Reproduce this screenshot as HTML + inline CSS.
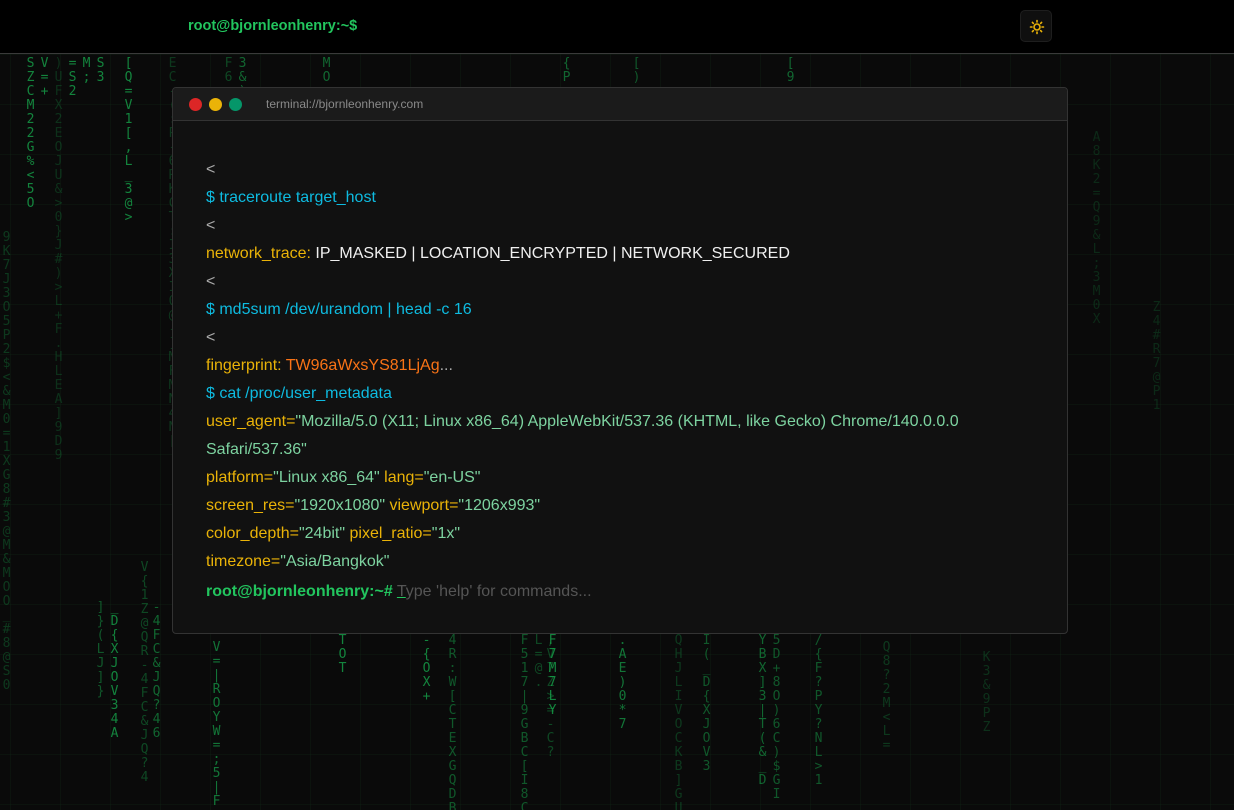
<!DOCTYPE html>
<html><head><meta charset="utf-8">
<style>
*{margin:0;padding:0;box-sizing:border-box}
html,body{width:1234px;height:810px;overflow:hidden;background:#0a0a0a}
body{position:relative;font-family:"Liberation Sans",sans-serif}
.grid{position:absolute;left:0;top:54px;width:1234px;height:756px;
background-image:linear-gradient(to right,rgba(20,60,30,.18) 1px,transparent 1px),linear-gradient(to bottom,rgba(20,60,30,.18) 1px,transparent 1px);
background-size:50px 50px;background-position:10px 0}
.col{position:absolute;writing-mode:vertical-rl;text-orientation:upright;font-family:"DejaVu Sans Mono","Liberation Mono",monospace;font-size:13px;letter-spacing:-1px;line-height:12px;color:#16a34a}
.top{position:absolute;left:0;top:0;width:1234px;height:54px;background:#000;border-bottom:1px solid #3a3a3a}
.brand{position:absolute;left:188px;top:18px;font-weight:bold;font-size:14.5px;color:#22c55e}
.theme{position:absolute;left:1020px;top:10px;width:32px;height:32px;border-radius:5px;background:#0f0f0f;border:1px solid #1e1e1e}
.term{position:absolute;left:172px;top:87px;width:896px;height:547px;background:#111;border:1px solid #333;border-radius:4px;overflow:hidden}
.thead{height:33px;background:#1b1b1b;border-bottom:1px solid #333;position:relative}
.dot{position:absolute;top:10px;width:13px;height:13px;border-radius:50%}
.url{position:absolute;left:93px;top:9px;font-size:12px;color:#8a8a8a}
.body{position:absolute;left:33px;top:68px;width:800px;font-size:16px;line-height:28px;color:#ddd}
.y{color:#eab308}.c{color:#0ebbe0}.g{color:#7dd3a0}.o{color:#f97316}.w{color:#f0f0f0}.d{color:#aaa}
.p{color:#22c55e;font-weight:bold}
</style></head><body>
<div class="grid"></div>
<div class="col" style="left:24px;top:56px;opacity:.8">SZCM22G%&lt;5O</div>
<div class="col" style="left:38px;top:56px;opacity:.8">V=+</div>
<div class="col" style="left:52px;top:56px;opacity:.25">)UFX2EOJU&amp;&gt;0}J#)&gt;L+F.HLEA]9D9</div>
<div class="col" style="left:66px;top:56px;opacity:.8">=S2</div>
<div class="col" style="left:80px;top:56px;opacity:.8">M;</div>
<div class="col" style="left:94px;top:56px;opacity:.8">S3</div>
<div class="col" style="left:0px;top:230px;opacity:.3">9K7J3O5P2$&lt;&amp;M0=1XG8#3@M&amp;MOO_#8@S0</div>
<div class="col" style="left:122px;top:56px;opacity:.8">[Q=V1[,L_3@&gt;</div>
<div class="col" style="left:166px;top:56px;opacity:.3">EC-(:P-6RKCT:I3XI0@-]MFMN4N[</div>
<div class="col" style="left:108px;top:600px;opacity:.8">_D{XJOV34A</div>
<div class="col" style="left:94px;top:600px;opacity:.5">]}(LJ]}</div>
<div class="col" style="left:150px;top:600px;opacity:.6">-4FC&amp;JQ?46</div>
<div class="col" style="left:138px;top:560px;opacity:.4">V{1Z@QR-4FC&amp;JQ?4</div>
<div class="col" style="left:210px;top:640px;opacity:.7">V=|ROYW=;5|F</div>
<div class="col" style="left:236px;top:56px;opacity:.6">3&amp;)</div>
<div class="col" style="left:222px;top:56px;opacity:.4">F6</div>
<div class="col" style="left:320px;top:56px;opacity:.6">MO</div>
<div class="col" style="left:336px;top:633px;opacity:.8">TOT</div>
<div class="col" style="left:420px;top:633px;opacity:.8">-{OX+</div>
<div class="col" style="left:446px;top:633px;opacity:.5">4R:W[CTEXGQDB</div>
<div class="col" style="left:518px;top:633px;opacity:.5">F517|9GBC[I8C5</div>
<div class="col" style="left:546px;top:633px;opacity:.8">F7M7LY</div>
<div class="col" style="left:532px;top:633px;opacity:.4">,V7Z&gt;=-C?L=@.</div>
<div class="col" style="left:616px;top:633px;opacity:.7">.AE)0*7</div>
<div class="col" style="left:672px;top:633px;opacity:.3">QHJLIVOCKB]GU</div>
<div class="col" style="left:700px;top:633px;opacity:.5">I(_D{XJOV3</div>
<div class="col" style="left:756px;top:633px;opacity:.6">YBX]3|T(&amp;_D</div>
<div class="col" style="left:770px;top:633px;opacity:.5">5D+8O)6C)$GI</div>
<div class="col" style="left:812px;top:633px;opacity:.5">/{F?PY?NL&gt;1</div>
<div class="col" style="left:560px;top:56px;opacity:.6">{P</div>
<div class="col" style="left:630px;top:56px;opacity:.5">[)</div>
<div class="col" style="left:784px;top:56px;opacity:.6">[9</div>
<div class="col" style="left:1090px;top:130px;opacity:.2">A8K2=Q9&amp;L;3M0X</div>
<div class="col" style="left:1150px;top:300px;opacity:.2">Z4#R7@P1</div>
<div class="col" style="left:880px;top:640px;opacity:.3">Q8?2M&lt;L=</div>
<div class="col" style="left:980px;top:650px;opacity:.25">K3&amp;9PZ</div>

<div class="top"><div class="brand">root@bjornleonhenry:~$</div>
<div class="theme"><svg width="32" height="32" viewBox="0 0 32 32" fill="none" stroke="#eab308" stroke-width="1.6" stroke-linecap="round"><circle cx="16" cy="16" r="3"/><path d="M16 9.5v1.5M16 21v1.5M9.5 16h1.5M21 16h1.5M11.4 11.4l1 1M19.6 19.6l1 1M11.4 20.6l1-1M19.6 12.4l1-1"/></svg></div></div>

<div class="term">
<div class="thead">
<div class="dot" style="left:16px;background:#dc2626"></div>
<div class="dot" style="left:36px;background:#eab308"></div>
<div class="dot" style="left:56px;background:#059669"></div>
<div class="url">terminal://bjornleonhenry.com</div>
</div>
<div class="body">
<div class="d">&lt;</div>
<div class="c">$ traceroute target_host</div>
<div class="d">&lt;</div>
<div><span class="y">network_trace:</span> <span class="w">IP_MASKED | LOCATION_ENCRYPTED | NETWORK_SECURED</span></div>
<div class="d">&lt;</div>
<div class="c">$ md5sum /dev/urandom | head -c 16</div>
<div class="d">&lt;</div>
<div><span class="y">fingerprint:</span> <span class="o">TW96aWxsYS81LjAg</span><span class="d">...</span></div>
<div class="c">$ cat /proc/user_metadata</div>
<div><span class="y">user_agent=</span><span class="g">"Mozilla/5.0 (X11; Linux x86_64) AppleWebKit/537.36 (KHTML, like Gecko) Chrome/140.0.0.0 Safari/537.36"</span></div>
<div><span class="y">platform=</span><span class="g">"Linux x86_64"</span> <span class="y">lang=</span><span class="g">"en-US"</span></div>
<div><span class="y">screen_res=</span><span class="g">"1920x1080"</span> <span class="y">viewport=</span><span class="g">"1206x993"</span></div>
<div><span class="y">color_depth=</span><span class="g">"24bit"</span> <span class="y">pixel_ratio=</span><span class="g">"1x"</span></div>
<div><span class="y">timezone=</span><span class="g">"Asia/Bangkok"</span></div>
<div style="margin-top:2px"><span class="p">root@bjornleonhenry:~#</span> <span style="color:#555;text-decoration:underline;text-decoration-color:#22c55e">T</span><span style="color:#555">ype 'help' for commands...</span></div>
</div>
</div>
</body></html>
